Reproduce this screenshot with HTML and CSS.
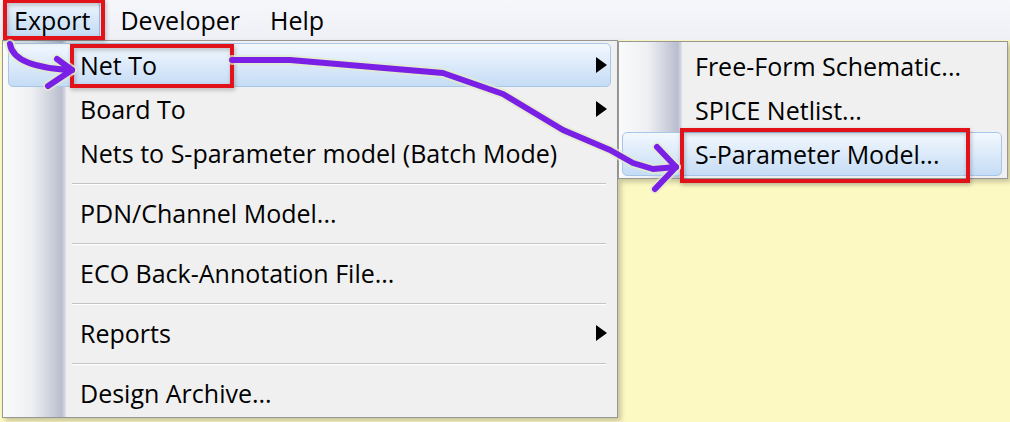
FILE: index.html
```html
<!DOCTYPE html>
<html lang="en">

<head>
  <meta charset="UTF-8">
  <meta name="viewport" content="width=device-width, initial-scale=1.0">
  <title>Export menu</title>
  <link rel="stylesheet" href="styles.css">
</head>

<body>
  <div class="screen">
    <nav class="menubar">
      <span class="menubar-item is-open">Export</span>
      <span class="menubar-item">Developer</span>
      <span class="menubar-item">Help</span>
    </nav>

    <div class="workspace">
      <ul class="menu menu-main">
        <li class="menu-item is-hot">Net To<span class="sub-arrow"></span></li>
        <li class="menu-item">Board To<span class="sub-arrow"></span></li>
        <li class="menu-item">Nets to S-parameter model (Batch Mode)</li>
        <li class="menu-sep"></li>
        <li class="menu-item">PDN/Channel Model...</li>
        <li class="menu-sep"></li>
        <li class="menu-item">ECO Back-Annotation File...</li>
        <li class="menu-sep"></li>
        <li class="menu-item">Reports<span class="sub-arrow"></span></li>
        <li class="menu-sep"></li>
        <li class="menu-item">Design Archive...</li>
      </ul>

      <ul class="menu menu-sub">
        <li class="menu-item">Free-Form Schematic...</li>
        <li class="menu-item">SPICE Netlist...</li>
        <li class="menu-item is-hot">S-Parameter Model...</li>
      </ul>
    </div>

    <!-- hand-drawn annotations on top of the screenshot -->
    <svg class="marks" viewBox="0 0 1010 422" aria-hidden="true">
      <g class="mark-box">
        <rect x="5" y="1" width="98" height="37" />
        <rect x="72" y="46" width="160" height="40" />
        <rect x="682" y="130" width="286" height="51" />
      </g>
      <g class="mark-halo">
        <path d="M10 44 C 12 58, 28 68, 72 70" />
        <path d="M57 59 L72 70 L48 86" />
        <path d="M232 60 L290 60 L443 73 L503 94 L563 130 L610 150 L633 163 L653 169 L676 167" />
        <path d="M657 147 L676 167 L655 189" />
      </g>
      <g class="mark-line">
        <path d="M10 44 C 12 58, 28 68, 72 70" />
        <path d="M57 59 L72 70 L48 86" />
        <path d="M232 60 L290 60 L443 73 L503 94 L563 130 L610 150 L633 163 L653 169 L676 167" />
        <path d="M657 147 L676 167 L655 189" />
      </g>
    </svg>
  </div>
</body>

</html>
```

FILE: styles.css
```css
* {
  box-sizing: border-box;
}

body {
  background: #fdf9c3;
  color: #000;
  font-family: "Open Sans", "Noto Sans", sans-serif;
  margin: 0;
}

.screen {
  height: 422px;
  overflow: hidden;
  position: relative;
  width: 1010px;
}

.menubar {
  background: linear-gradient(#f6f7fb, #eef0f6);
  display: flex;
  font-size: 25px;
  gap: 10px;
  height: 40px;
  padding: 2px 0 2px 4px;
}

.menubar-item {
  align-items: center;
  border: 1px solid transparent;
  border-radius: 3px;
  display: flex;
  padding: 0 9px;
}

.menubar-item.is-open {
  background: linear-gradient(#eef5fd, #d6e7f8 50%, #c4dbf3);
  border-color: #9fbfe0;
}

.workspace {
  align-items: flex-start;
  background: #fdf9c3;
  display: flex;
  height: 382px;
}

.menu {
  background:
    linear-gradient(to right, #fafafb, #eff0f3 45%, #d4d7e1 70%, #b9bdcd 93%, #dfe1e8) 0 0 / 63px 100% no-repeat,
    #f0f0f0;
  border: 1px solid #979797;
  box-shadow: 3px 3px 5px rgba(0, 0, 0, 0.22);
  font-size: 25px;
  list-style: none;
  margin: 0;
  padding: 2px 0;
}

.menu-main {
  margin-left: 2px;
  width: 616px;
}

.menu-sub {
  margin-top: 1px;
  position: relative;
  width: 390px;
  z-index: 1;
}

.menu-item {
  align-items: center;
  border: 1px solid transparent;
  border-radius: 5px;
  display: flex;
  height: 44px;
  justify-content: space-between;
  margin: 0 6px 0 5px;
  padding: 0 3px 0 71px;
  white-space: nowrap;
}

.menu-sub .menu-item {
  margin: 0 5px 0 3px;
  padding-left: 72px;
}

.menu-item.is-hot {
  background: linear-gradient(#f2f8fe, #dceafa 50%, #c5dcf5);
  border-color: #a7c6e8;
}

.sub-arrow {
  border-bottom: 8px solid transparent;
  border-left: 11px solid #000;
  border-top: 8px solid transparent;
  height: 0;
  width: 0;
}

.menu-sep {
  align-items: center;
  display: flex;
  height: 16px;
  margin: 0 11px 0 69px;
}

.menu-sep::before {
  background: #c4c4c4;
  box-shadow: 0 1px #fff;
  content: "";
  flex: 1;
  height: 1px;
}

.marks {
  height: 422px;
  left: 0;
  pointer-events: none;
  position: absolute;
  top: 0;
  width: 1010px;
  z-index: 2;
}

.mark-box rect {
  fill: none;
  filter: drop-shadow(1px 2px 2px rgba(0, 0, 0, 0.25));
  stroke: #e2121b;
  stroke-width: 4;
}

.mark-halo path,
.mark-line path {
  fill: none;
  stroke-linecap: round;
  stroke-linejoin: round;
}

.mark-halo path {
  stroke: rgba(225, 235, 200, 0.7);
  stroke-width: 10;
}

.mark-line path {
  stroke: #7a1fe6;
  stroke-width: 6;
}
```
